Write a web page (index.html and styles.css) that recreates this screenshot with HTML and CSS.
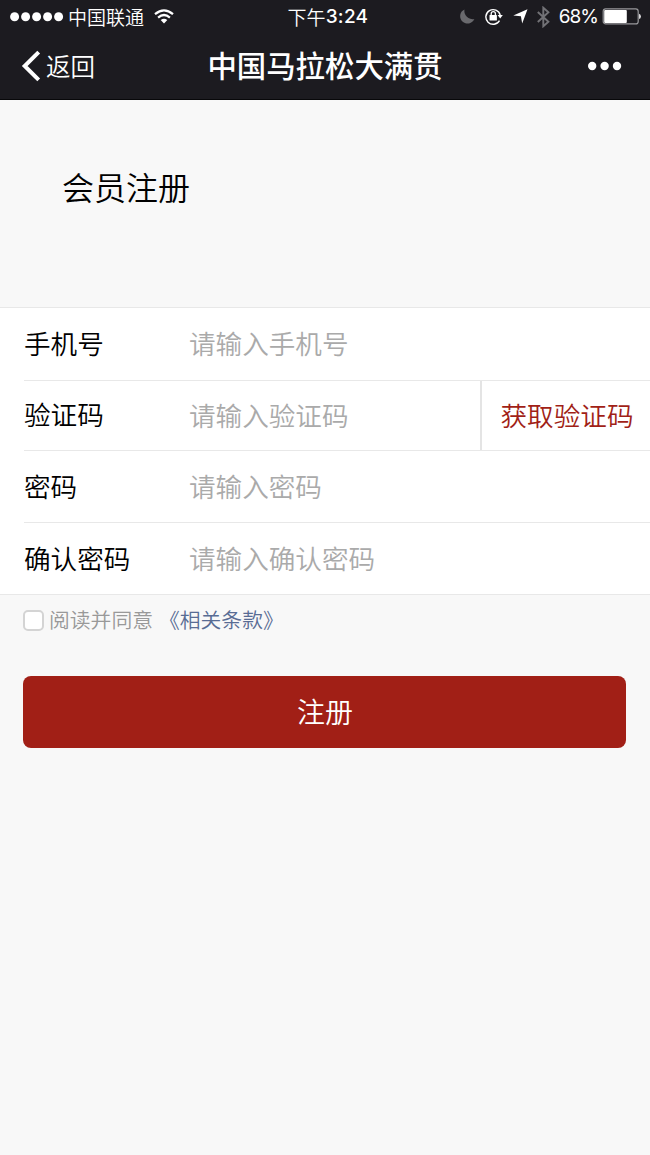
FILE: index.html
```html
<!DOCTYPE html>
<html lang="zh-CN">
<head>
<meta charset="utf-8">
<title>中国马拉松大满贯</title>
<link rel="stylesheet" href="styles.css">
</head>
<body>
<header class="top">
  <div class="status">
    <div class="status-left">
      <svg class="signal" width="54" height="10" viewBox="0 0 54 10"><g fill="#fff"><circle cx="4.6" cy="4.8" r="4.5"/><circle cx="15.6" cy="4.8" r="4.5"/><circle cx="26.6" cy="4.8" r="4.5"/><circle cx="37.6" cy="4.8" r="4.5"/><circle cx="48.6" cy="4.8" r="4.5"/></g></svg>
      <span class="carrier">中国联通</span>
      <svg class="wifi" width="20" height="15" viewBox="0 0 20 15"><g fill="none" stroke="#fff" stroke-width="2.2"><path d="M1 5.2Q10-2.6 19 5.2"/><path d="M4.1 8.6Q10 3.4 15.9 8.6"/></g><path d="M6.7 11.1Q10 8.3 13.3 11.1L10 14.4Z" fill="#fff"/></svg>
    </div>
    <div class="clock"><span class="period">下午</span><span class="digits">3:24</span></div>
    <div class="status-right">
      <svg class="moon" width="15" height="15" viewBox="0 0 15 15"><path d="M4.5 .4A7.4 7.4 0 1 0 14.4 10A8.3 8.3 0 0 1 4.500 .4Z" fill="#69696d"/></svg>
      <svg class="lock" width="18" height="17" viewBox="0 0 18 17"><path d="M14.5 12.6A7.3 7.3 0 1 1 15.2 7" fill="none" stroke="#fff" stroke-width="1.4"/><path d="M12.6 7.1H17.8L15.2 10.5Z" fill="#fff"/><rect x="4.5" y="7" width="7.4" height="5.5" rx=".5" fill="#fff"/><path d="M6.2 7.5V5.8a2.1 2.1 0 0 1 4.2 0V7.5" fill="none" stroke="#fff" stroke-width="1.3"/></svg>
      <svg class="arrow" width="15" height="15" viewBox="0 0 15 15"><path d="M14.5 .3L9.2 14.6L7.9 7.3L.3 6.6Z" fill="#fff"/></svg>
      <svg class="bluetooth" width="13" height="22" viewBox="0 0 13 22"><path d="M.8 6L11.4 15.8L6.3 20.3V1.7L11.4 6.2L.8 16" fill="none" stroke="#727276" stroke-width="1.9"/></svg>
      <span class="percent">68%</span>
      <svg class="battery" width="39" height="17" viewBox="0 0 39 17"><rect x="1.2" y=".9" width="35" height="15" rx="2.5" fill="none" stroke="#98989b" stroke-width="1.2"/><rect x="2.2" y="1.9" width="22.6" height="13" rx="1" fill="#fff"/><path d="M37.2 5.8Q38.800 6.3 38.800 8.4T37.2 11Z" fill="#fff"/></svg>
    </div>
  </div>
  <nav class="nav">
    <a class="back"><svg width="20" height="32" viewBox="0 0 20 32"><path d="M17.7 2.2L3.7 16L17.7 29.8" fill="none" stroke="#fff" stroke-width="4"/></svg><span>返回</span></a>
    <h1 class="title">中国马拉松大满贯</h1>
    <div class="more"><svg width="34" height="10" viewBox="0 0 34 10"><g fill="#fff"><circle cx="4.2" cy="5" r="4.2"/><circle cx="16.6" cy="5" r="4.2"/><circle cx="29" cy="5" r="4.2"/></g></svg></div>
  </nav>
</header>
<main>
  <h2 class="heading">会员注册</h2>
  <form>
    <div class="fields">
      <label class="row row-first"><span class="label">手机号</span><input class="input" type="tel" placeholder="请输入手机号"></label>
      <div class="row row-code"><label class="label" for="code">验证码</label><input id="code" class="input" type="text" placeholder="请输入验证码"><button type="button" class="get-code">获取验证码</button></div>
      <label class="row"><span class="label">密码</span><input class="input" type="password" placeholder="请输入密码"></label>
      <label class="row"><span class="label">确认密码</span><input class="input" type="password" placeholder="请输入确认密码"></label>
    </div>
    <label class="terms"><input class="check" type="checkbox"><span>阅读并同意</span><a class="link">《相关条款》</a></label>
    <button type="button" class="submit">注册</button>
  </form>
</main>
</body>
</html>
```
FILE: styles.css
```css
* { box-sizing: border-box; }
body {
  margin: 0;
  min-height: 1155px;
  background: #f8f8f8;
  color: #000;
  font-family: "Noto Sans CJK SC", sans-serif;
  font-weight: 350;
}
svg { display: block; flex: none; }
h1, h2 { margin: 0; }
input, button { font: inherit; border: 0; padding: 0; margin: 0; background: none; border-radius: 0; }
.top { height: 100px; background: #1c1b20; color: #fff; border-bottom: 1px solid #08080a; }
.status {
  height: 32px;
  display: grid;
  grid-template-columns: 1fr auto 1fr;
  align-items: center;
  padding: 0 9px 0 10px;
  font-size: 19px;
  line-height: 32px;
  white-space: nowrap;
}
.status-left, .status-right, .clock { display: flex; align-items: center; }
.status-right { justify-content: flex-end; }
.carrier { margin-left: 4px; }
.wifi { margin-left: 10px; }
.clock { padding-left: 5px; }
.digits { padding-top: 1px; font-family: Inter, sans-serif; font-weight: 500; letter-spacing: .3px; }
.lock { margin-left: 10px; }
.arrow { margin-left: 10px; }
.bluetooth { margin-left: 9px; }
.percent { margin-left: 9px; padding-top: 1px; font-family: Inter, sans-serif; font-weight: 400; letter-spacing: -1px; }
.battery { margin-left: 4px; }
.nav {
  height: 68px;
  display: grid;
  grid-template-columns: 1fr auto 1fr;
  align-items: center;
  padding: 0 28px 0 21px;
}
.back { display: flex; align-items: center; gap: 5px; font-size: 24.5px; line-height: 40px; }
.title { padding: 0 0 4px 7px; font-size: 29.4px; line-height: 40px; font-weight: 500; }
.more { justify-self: end; }
.heading { padding: 62px 62px 97px; font-size: 32px; line-height: 48px; font-weight: 350; }
.fields { background: #fff; border-top: 1px solid #e8e8e8; border-bottom: 1px solid #e8e8e8; padding-left: 24px; }
.row { height: 72px; display: flex; align-items: center; font-size: 26.6px; }
.row + .row { border-top: 1px solid #e8e8e8; }
.row-first { padding-bottom: 1px; }
.row.row-code { height: 70px; }
.label { width: 165px; flex: none; padding-bottom: 3px; }
.row-code .label { padding-bottom: 5px; }
.input { flex: 1; min-width: 0; height: 60px; padding-bottom: 3px; outline: 0; }
.input::placeholder { color: #aaa; opacity: 1; }
.get-code { align-self: stretch; width: 170px; padding: 0 0 2px 2px; color: #a11f17; border-left: 2px solid #e4e4e4; }
.terms { display: flex; align-items: center; height: 50px; padding-left: 23px; font-size: 20.8px; color: #999; }
.terms span, .link { padding-bottom: 2px; }
.check { appearance: none; width: 21px; height: 21px; margin-right: 5px; border: 2px solid #d4d4d4; border-radius: 5px; background: #fff; }
.link { margin-left: 6px; color: #586c94; }
.submit { display: block; width: 603px; height: 72px; margin: 31px auto 0 23.4px; padding-bottom: 3px; border-radius: 8px; background: #a11f16; color: #fff; font-size: 28px; }
```
